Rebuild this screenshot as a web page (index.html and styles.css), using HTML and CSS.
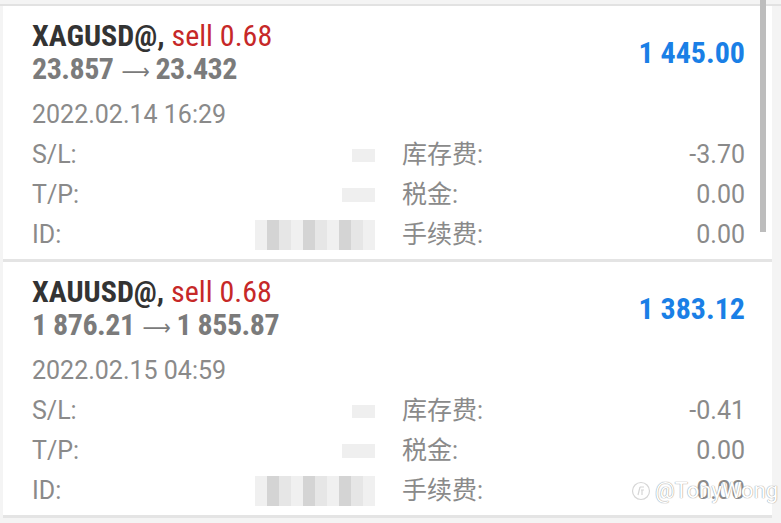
FILE: index.html
```html
<!DOCTYPE html>
<html lang="zh-CN">
<head>
    <meta charset="UTF-8">
    <meta name="viewport" content="width=device-width, initial-scale=1.0">
    <title>交易历史</title>
    <link rel="stylesheet" href="styles.css">
</head>
<body>

    <div class="list">

        <div class="deal">
            <div class="deal-head">
                <div>
                    <div class="symbol">XAGUSD@, <span class="sell">sell 0.68</span></div>
                    <div class="prices">23.857<span class="arrow">&#10230;</span>23.432</div>
                </div>
                <div class="profit">1 445.00</div>
            </div>
            <div class="date">2022.02.14 16:29</div>
            <div class="details">
                <div class="field"><span>S/L:</span><span class="blur blur-sl"></span></div>
                <div class="field"><span>库存费:</span><span>-3.70</span></div>
                <div class="field"><span>T/P:</span><span class="blur blur-tp"></span></div>
                <div class="field"><span>税金:</span><span>0.00</span></div>
                <div class="field"><span>ID:</span><span class="blur blur-id"></span></div>
                <div class="field"><span>手续费:</span><span>0.00</span></div>
            </div>
        </div>

        <div class="deal">
            <div class="deal-head">
                <div>
                    <div class="symbol">XAUUSD@, <span class="sell">sell 0.68</span></div>
                    <div class="prices">1 876.21<span class="arrow">&#10230;</span>1 855.87</div>
                </div>
                <div class="profit">1 383.12</div>
            </div>
            <div class="date">2022.02.15 04:59</div>
            <div class="details">
                <div class="field"><span>S/L:</span><span class="blur blur-sl"></span></div>
                <div class="field"><span>库存费:</span><span>-0.41</span></div>
                <div class="field"><span>T/P:</span><span class="blur blur-tp"></span></div>
                <div class="field"><span>税金:</span><span>0.00</span></div>
                <div class="field"><span>ID:</span><span class="blur blur-id"></span></div>
                <div class="field"><span>手续费:</span><span>0.00</span></div>
            </div>
        </div>

    </div>

    <div class="scrollbar"></div>

    <div class="watermark">
        <svg width="20" height="20" viewBox="0 0 20 20">
            <circle cx="10" cy="10" r="8.5" fill="none" stroke="#d6d6d6" stroke-width="1.2"/>
            <path d="M7 14 L9 6 M9 6 L13 6 M10 9 L13 9 M11 9 L11 14" fill="none" stroke="#d6d6d6" stroke-width="1.2"/>
        </svg>
        <span>@TonyWong</span>
    </div>

</body>
</html>
```

FILE: styles.css
```css
body {
    margin: 0;
    background-color: #f4f4f4;
    font-family: Roboto, "Noto Sans CJK SC", sans-serif;
    color: #8a8a8a;
    position: relative;
    height: 523px;
    overflow: hidden;
}

.list {
    margin-top: 4px;
    border-top: 2px solid #e2e2e2;
}

.deal {
    background-color: #ffffff;
    margin: 0 9px 0 3px;
    padding: 13px 27px 4px 29px;
    height: 236px;
    border-bottom: 3px solid #e4e4e4;
}

.deal-head {
    display: flex;
    justify-content: space-between;
    align-items: center;
}

.symbol,
.prices,
.profit {
    font-family: "Roboto Condensed", "Liberation Sans Narrow", Roboto, sans-serif;
    font-stretch: condensed;
    font-weight: bold;
    font-size: 30px;
    line-height: 33px;
}

.symbol {
    color: #333333;
}

.sell {
    color: #c62828;
    font-weight: normal;
}

.prices {
    color: #7b7b7b;
    letter-spacing: -0.5px;
}

.arrow {
    font-family: "DejaVu Sans", sans-serif;
    font-weight: normal;
    font-size: 22px;
    line-height: 0;
    margin: 0 6px 0 8px;
}

.profit {
    color: #1a7fe6;
}

.date {
    margin-top: 10px;
    font-size: 25px;
    line-height: 40px;
}

.details {
    display: grid;
    grid-template-columns: 1fr 1fr;
    column-gap: 27px;
    font-size: 25px;
    line-height: 40px;
}

.field {
    display: flex;
    justify-content: space-between;
    align-items: center;
}

.blur {
    display: block;
    background-color: #efefef;
}

.blur-sl {
    width: 23px;
    height: 13px;
}

.blur-tp {
    width: 33px;
    height: 14px;
}

.blur-id {
    width: 120px;
    height: 30px;
    background: repeating-linear-gradient(90deg, #f0f0f0 0 12px, #d4d4d4 12px 24px, #e6e6e6 24px 36px);
}

.scrollbar {
    position: absolute;
    top: 0;
    left: 760px;
    width: 6px;
    height: 232px;
    background-color: #bdbdbd;
}

.watermark {
    position: absolute;
    left: 631px;
    top: 478px;
    display: flex;
    align-items: center;
    gap: 4px;
    font-size: 22px;
    color: #ffffff;
    text-shadow: 0 0 1px #9a9a9a, 0 0 1px #9a9a9a;
}
```
